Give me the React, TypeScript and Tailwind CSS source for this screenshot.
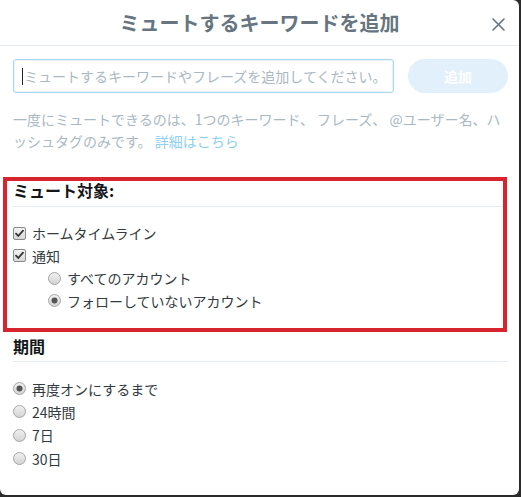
import React from "react";

const font = { fontFamily: '"Noto Sans CJK JP", "Liberation Sans", sans-serif' };

function Check() {
  return (
    <svg width="13" height="13" viewBox="0 0 13 13" className="shrink-0">
      <defs>
        <linearGradient id="cbg" x1="0" y1="0" x2="0" y2="1">
          <stop offset="0" stopColor="#f4f4f4" />
          <stop offset="1" stopColor="#d6d6d6" />
        </linearGradient>
      </defs>
      <rect x="0.5" y="0.5" width="12" height="12" rx="1.5" fill="url(#cbg)" stroke="#8a8a8a" />
      <path d="M3 6.6 L5.3 9 L10 3.6" fill="none" stroke="#333" strokeWidth="1.8" strokeLinecap="round" strokeLinejoin="round" />
    </svg>
  );
}

function Radio({ checked }: { checked?: boolean }) {
  return (
    <svg width="13" height="13" viewBox="0 0 13 13" className="shrink-0">
      <defs>
        <linearGradient id="rbg" x1="0" y1="0" x2="0" y2="1">
          <stop offset="0" stopColor="#f2f2f2" />
          <stop offset="1" stopColor="#d2d2d2" />
        </linearGradient>
      </defs>
      <circle cx="6.5" cy="6.5" r="6" fill="url(#rbg)" stroke="#a6a6a6" />
      {checked && <circle cx="6.5" cy="6.5" r="3" fill="#555" />}
    </svg>
  );
}

function Row({ children, indent, icon, tall }: { children: React.ReactNode; indent?: boolean; icon: React.ReactNode; tall?: boolean }) {
  return (
    <div className={`flex items-center gap-[6px] text-[14px] text-[#333a40] ${tall ? "h-[23.3px]" : "h-[22.5px]"} ${indent ? "pl-[35px]" : ""}`}>
      {icon}
      <span className="leading-none">{children}</span>
    </div>
  );
}

export default function App() {
  return (
    <div className="h-[497px] w-[521px] overflow-hidden bg-[#2b2b2b]" style={font}>
      <div className="relative h-[495px] w-[519px] rounded-[6px] rounded-tl-none bg-white">
        {/* header */}
        <div className="relative flex h-[46px] items-center justify-center border-b border-[#e6ecf0]">
          <h1 className="text-[20px] font-bold leading-none text-[#66757f]">ミュートするキーワードを追加</h1>
          <svg className="absolute right-[14px] top-[18px]" width="13" height="13" viewBox="0 0 13 13">
            <path d="M1 1 L12 12 M12 1 L1 12" stroke="#66757f" strokeWidth="1.6" strokeLinecap="round" />
          </svg>
        </div>

        <div className="pl-[13px] pr-[11px]">
          {/* input row */}
          <div className="mt-[13px] flex items-center gap-[14px]">
            <div className="flex h-[34px] w-[381px] items-center overflow-hidden whitespace-nowrap rounded-[3px] border border-[#a8d8f0] pl-[8px] shadow-[inset_0_0_0_1px_rgba(168,216,240,0.25)]">
              <span className="mr-[1px] h-[17px] w-px shrink-0 bg-[#222]" />
              <span className="text-[14px] leading-none text-[#aab8c2]">ミュートするキーワードやフレーズを追加してください。</span>
            </div>
            <div className="flex h-[34px] w-[100px] items-center justify-center rounded-full bg-[#e2f0fb] text-[14px] font-bold text-white">
              追加
            </div>
          </div>

          {/* help */}
          <p className="mt-[15px] text-[14px] leading-[22px] text-[#aab8c2]">
            一度にミュートできるのは、1つのキーワード、 フレーズ、 @ユーザー名、ハ
            <br />
            ッシュタグのみです。 <span className="text-[#8ed0f2]">詳細はこちら</span>
          </p>

          {/* target section */}
          <div className="relative mt-[28px]">
            <h2 className="text-[16px] font-bold leading-[20px] text-[#14171a]">ミュート対象:</h2>
            <div className="mt-[6px] border-b border-[#e6ecf0]" />
            <div className="mt-[15px]">
              <Row icon={<Check />}>ホームタイムライン</Row>
              <Row icon={<Check />}>通知</Row>
              <Row indent icon={<Radio />}>すべてのアカウント</Row>
              <Row indent icon={<Radio checked />}>フォローしていないアカウント</Row>
            </div>
            <div className="h-[19px]" />
            <div className="pointer-events-none absolute left-[-10px] top-[-3px] h-[155px] w-[504px] border-[4px] border-[#d7242f]" />
          </div>

          {/* duration */}
          <h2 className="mt-[5px] text-[16px] font-bold leading-[20px] text-[#14171a]">期間</h2>
          <div className="mt-[5px] border-b border-[#e6ecf0]" />
          <div className="mt-[15px]">
            <Row tall icon={<Radio checked />}>再度オンにするまで</Row>
            <Row tall icon={<Radio />}>24時間</Row>
            <Row tall icon={<Radio />}>7日</Row>
            <Row tall icon={<Radio />}>30日</Row>
          </div>
        </div>
      </div>
    </div>
  );
}
